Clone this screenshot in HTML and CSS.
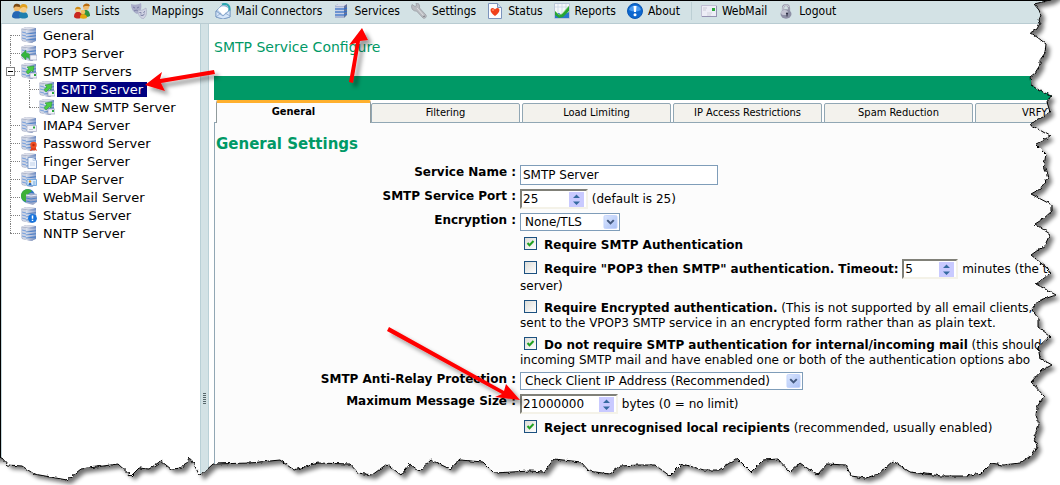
FILE: index.html
```html
<!DOCTYPE html>
<html lang="en">
<head>
<meta charset="utf-8">
<title>SMTP Service Configure</title>
<link rel="stylesheet" href="styles.css">
</head>
<body>
<svg class="defs" aria-hidden="true">
  <defs>
    <linearGradient id="gSrv" x1="0" x2="1"><stop offset="0" stop-color="#dfe4ee"/><stop offset=".45" stop-color="#a3b0cf"/><stop offset="1" stop-color="#6d8cc4"/></linearGradient>
    <linearGradient id="gBtn" x1="0" y1="0" x2="1" y2="1"><stop offset="0" stop-color="#dbe6fe"/><stop offset="1" stop-color="#a9c0f5"/></linearGradient>
    <symbol id="server" viewBox="0 0 16 16">
      <path d="M0 2 5 0l10 1v12l-4 3-10-2z" fill="#8d97b3"/>
      <path d="M0 2 5 0l10 1-4 2z" fill="#dcdfea"/>
      <path d="M0 2l5 1v12l-5-2z" fill="#cdd3e2"/>
      <path d="M5 3l10-2v13l-5 2-5-1z" fill="url(#gSrv)"/>
      <path d="M1 5l4 1M1 8l4 1M1 11l4 1" stroke="#6d9add" stroke-width=".9"/>
      <path d="M5 7l10-1M5 10l10-1M5 13l10-1" stroke="#3c78c8" stroke-width=".8"/>
      <path d="M5 5l10-1M5 8l10-1M5 11l10-1" stroke="#d3dcf0" stroke-width=".6"/>
    </symbol>
    <symbol id="stack" viewBox="0 0 16 16">
      <path d="M2 3l3-2h9v11l-3 3H2z" fill="#66749c"/>
      <path d="M2 3l3-2h9l-3 2z" fill="#d8ddea"/>
      <path d="M2 3h9v12H2z" fill="#a9b6d3"/>
      <path d="M2 6h9l3-1M2 9h9l3-1M2 12h9l3-1" fill="none" stroke="#2f70d0" stroke-width="1.1"/>
      <path d="M2 4.500h9M2 7.500h9M2 10.500h9" stroke="#dbe2f1" stroke-width=".6"/>
    </symbol>
    <symbol id="users" viewBox="0 0 16 16">
      <path d="M0 14c0-4 2-6 5-6s5 2 5 6c-2 2-8 2-10 0z" fill="#2466b4"/>
      <circle cx="5" cy="5" r="3.300" fill="#f2bc6d"/><path d="M1.500 5C1 1 4 0 6 1c2 0 3 2 2 3-2 0-4-1-5 0z" fill="#7b4a15"/>
      <path d="M7 14c0-4 1-5 4-5s5 1 5 5c-2 2-7 2-9 0z" fill="#1f7fae"/>
      <circle cx="11.500" cy="6.500" r="3.300" fill="#f6cc86"/><path d="M8 6c-1-3 1-5 4-5 3 0 4 3 3 5-1-2-4-3-7 0z" fill="#e0a020"/>
    </symbol>
    <symbol id="lists" viewBox="0 0 16 16">
      <circle cx="12" cy="4" r="3" fill="#f2bc6d"/><path d="M9 4c0-4 6-5 7-1-2 1-4-1-7 1z" fill="#b86d12"/>
      <path d="M7 12c0-4 2-5 5-5 2 0 4 2 4 6-3 2-7 1-9-1z" fill="#2f9340"/>
      <circle cx="4" cy="7" r="2.800" fill="#f6cc86"/><path d="M1 7c0-4 5-4 6-1-2 1-4-1-6 1z" fill="#ce8a16"/>
      <path d="M0 14c0-3 1-5 4-5s4 2 4 5c-2 2-6 2-8 0z" fill="#c8271f"/>
      <circle cx="9" cy="9" r="2.300" fill="#efbf62"/><path d="M6 15c0-3 1-4 3-4s4 1 4 4c-2 1-5 1-7 0z" fill="#e3a80f"/>
    </symbol>
    <symbol id="masks" viewBox="0 0 16 16">
      <path d="M0 1c3 1 7 1 10-1 1 5 0 9-4 11C2 9 0 6 0 1z" fill="#a9adc9"/>
      <path d="M2 4l2 1M6 5l2-1M3 8c2-1 3-1 4 0" stroke="#6a6f98" stroke-width=".8" fill="none"/>
      <path d="M7 7c3 1 5 0 8-2 1 4 1 8-3 11-4-2-5-5-5-9z" fill="#cfd2e2" stroke="#a2a6c0" stroke-width=".6"/>
      <path d="M8.500 9.500l2 .5M12.500 9.500l1.500-1M9.500 12c2 1 3 0 4-1" stroke="#60658e" stroke-width=".9" fill="none"/>
    </symbol>
    <symbol id="mail" viewBox="0 0 16 16">
      <path d="M1 8 8 1l7 5v8l-7 2-7-2z" fill="#b4cbe6" stroke="#6e91bd" stroke-width=".7"/>
      <path d="M3 7c1-4 9-5 11 0l-6 5z" fill="#fff"/><path d="M7 1.500c5-2 9 2 7 6.500" stroke="#2ba7b1" stroke-width="2" fill="none"/>
      <path d="M1 8l7 5 7-6v7l-7 2-7-2z" fill="#d5e5f8" stroke="#6e91bd" stroke-width=".7"/><path d="M1 14l5-4M15 13l-5-3" stroke="#7d9cc4" stroke-width=".7"/>
    </symbol>
    <symbol id="wrench" viewBox="0 0 16 16">
      <path d="M1 1.500l3 2 1.500-1L5 0c3 0 4 2 3.500 5l6.500 7c1 2-1 4-3 3L5.500 8C2 8.500-.5 5 1 1.500z" fill="#b9bbc0" stroke="#94979d" stroke-width=".7"/>
      <path d="M6 5l7 8" stroke="#dfe1e4"/><circle cx="13" cy="13.300" r=".8" fill="#6e7178"/>
    </symbol>
    <symbol id="heart" viewBox="0 0 16 16">
      <path d="M1.500.5h9l4 4v11h-13z" fill="#fbfcff" stroke="#7c94bd"/><path d="M10.500.5v4h4" fill="#cfdcef" stroke="#7c94bd"/>
      <path d="M8 13C2 9 3 5 5.500 5 7 5 8 6.500 8 6.500S9 5 10.500 5C13 5 14 9 8 13z" fill="#f0401c"/><circle cx="6" cy="7" r="1" fill="#ff8b66"/>
    </symbol>
    <symbol id="chart" viewBox="0 0 16 16">
      <path d="M.5.500h15v15H.5z" fill="#f4f7fb" stroke="#b9c6d8"/><path d="M4 1v14M8 1v14M12 1v14M1 4h14" stroke="#c6d3e4" stroke-width=".7"/>
      <path d="M1 11l4-1 3 2 7-3v6H1z" fill="#2c75cb"/><path d="M1 8l4 4 3-1 7-8v5l-6 6-4 1-4-3z" fill="#26a534"/><path d="M1 8l4 4 3-1 7-8" fill="none" stroke="#86d66e" stroke-width=".7"/>
    </symbol>
    <symbol id="info" viewBox="0 0 16 16">
      <circle cx="8" cy="8" r="7.500" fill="#0c67cf" stroke="#0a58b4"/><path d="M2 7c1-6 11-6 12 0-4 2-8 2-12 0z" fill="#4b9bf0"/>
      <path d="M6.500 3h3L9 9H7z" fill="#fff"/><circle cx="8" cy="11.700" r="1.500" fill="#fff"/>
    </symbol>
    <symbol id="webmail" viewBox="0 0 16 16">
      <path d="M.5 2.500h15v11H.5z" fill="#ededf6" stroke="#c0bfd4"/><path d="M1 13.500h15M15.500 3v11" stroke="#9592b2"/>
      <path d="M2 5h4M2 7h3" stroke="#c2c3d1" stroke-width=".8"/><path d="M11 5h3v3h-3z" fill="#2ba83b"/><path d="M6 10h5M6 12h4" stroke="#cccdd9" stroke-width=".8"/>
    </symbol>
    <symbol id="lock" viewBox="0 0 16 16">
      <path d="M5 8V5c0-4 6-4 6 0v3" fill="none" stroke="#9a9cae" stroke-width="2.200"/><path d="M5 7V5c0-3 5-4 6-1" fill="none" stroke="#d8d9e4"/>
      <ellipse cx="8" cy="11" rx="5.500" ry="4.700" fill="#8e90a6"/><ellipse cx="6.500" cy="9.500" rx="3.500" ry="2.600" fill="#c3c4d2"/><circle cx="9" cy="10.500" r="1.100" fill="#303247"/><path d="M9 10.500v3" stroke="#303247"/>
    </symbol>
    <symbol id="b-in" viewBox="0 0 16 16"><path d="M0 10l5-5v3c4 0 5 3 4 7-1-2-2-3-4-3v3z" fill="#35b53e" stroke="#2c9a38" stroke-width=".5"/><path d="M9 10h7v5H9z" fill="#f1f2f9" stroke="#9b9fba" stroke-width=".7"/></symbol>
    <symbol id="b-out" viewBox="0 0 16 16"><path d="M6 4l7-1-1 6-1.500-1.500L7 11 5 8.500 8 6z" fill="#4ccb43" stroke="#2c9a38" stroke-width=".6"/><path d="M9 10h7v5H9z" fill="#f1f2f9" stroke="#9b9fba" stroke-width=".7"/><path d="M13 11h2v2h-2z" fill="#2ba83b"/></symbol>
    <symbol id="b-card" viewBox="0 0 16 16"><path d="M6 8.500h9.500v6H6z" fill="#f1f2f9" stroke="#b4b7cb" stroke-width=".8"/><path d="M12 9.500h2v2h-2z" fill="#2ba83b"/><path d="M8 12.500h4" stroke="#c3c5d3"/></symbol>
    <symbol id="b-seal" viewBox="0 0 16 16"><path d="M11 11l-2 5 3-1 1 1 1-1 2 1-2-5z" fill="#e23a17"/><circle cx="12.500" cy="10" r="3.200" fill="#f04e22"/><circle cx="12.500" cy="10" r="1.200" fill="#b72a10"/></symbol>
    <symbol id="b-page" viewBox="0 0 16 16"><path d="M7 4.500h5l3.500 3v8H7z" fill="#f2f7ff" stroke="#7f9cca" stroke-width=".9"/><path d="M12 4.500v3h3.500M9 10h5M9 12h5" fill="none" stroke="#b3c6e2" stroke-width=".8"/></symbol>
    <symbol id="b-id" viewBox="0 0 16 16"><path d="M6 8.500h9.500v6H6z" fill="#d9ebfc" stroke="#6fa6df" stroke-width=".9"/><circle cx="9" cy="10.500" r="1.200" fill="#e29a2a"/><path d="M7.500 14c0-3 3-3 3 0z" fill="#2a62b5"/><path d="M12 11h2.500M12 13h2.500" stroke="#5594d3" stroke-width=".8"/></symbol>
    <symbol id="b-info" viewBox="0 0 16 16"><circle cx="11.500" cy="11.300" r="4.400" fill="#1673dc"/><path d="M11.500 8.500v3.300M11.500 12.800v1.300" stroke="#fff" stroke-width="1.500"/></symbol>
    <symbol id="globe" viewBox="0 0 16 16"><circle cx="7" cy="7" r="7" fill="#2e75c3"/><path d="M0 7c0-6 7-9 11-5L7 5l1 3-3 5c-3-1-5-3-5-6z" fill="#3fb039"/><path d="M5 6l5-2 6 1v8l-4 3-7-2z" fill="#9ba8c9"/><path d="M5 9l5 1 6-1M5 12l5 1 6-1" stroke="#3c78c8" stroke-width=".8" fill="none"/><path d="M5 6l5 1 6-1" stroke="#eceffa" fill="none"/></symbol>
    <symbol id="down" viewBox="0 0 15 15"><rect x=".5" y=".5" width="14" height="14" rx="1.500" fill="url(#gBtn)" stroke="#c3d3fc"/><path d="M4 5.500l3.500 3.500L11 5.500" fill="none" stroke="#43597f" stroke-width="2.200"/></symbol>
    <symbol id="spin" viewBox="0 0 15 15"><rect width="15" height="15" fill="#c9caff"/><path d="M4 6l3.500-3.500L11 6zM4 9.500h7L7.500 13z" fill="#356aa0"/></symbol>
  </defs>
</svg>

<div class="app">
  <nav class="toolbar" aria-label="Main">
    <a href="#users"><svg><use href="#users"/></svg>Users</a>
    <a href="#lists"><svg><use href="#lists"/></svg>Lists</a>
    <a href="#mappings"><svg><use href="#masks"/></svg>Mappings</a>
    <a href="#connectors"><svg><use href="#mail"/></svg>Mail Connectors</a>
    <a href="#services"><svg><use href="#stack"/></svg>Services</a>
    <a href="#settings"><svg><use href="#wrench"/></svg>Settings</a>
    <a href="#status"><svg><use href="#heart"/></svg>Status</a>
    <a href="#reports"><svg><use href="#chart"/></svg>Reports</a>
    <a href="#about"><svg><use href="#info"/></svg>About</a>
    <span class="divider"></span>
    <a href="#webmail"><svg><use href="#webmail"/></svg>WebMail</a>
    <a href="#logout"><svg><use href="#lock"/></svg>Logout</a>
  </nav>

  <div class="workspace">
    <aside class="sidebar">
      <ul class="tree">
        <li><a href="#general"><svg><use href="#server"/></svg><span>General</span></a></li>
        <li><a href="#pop3"><svg><use href="#server"/><use href="#b-in"/></svg><span>POP3 Server</span></a></li>
        <li><button class="expander" aria-label="Collapse SMTP Servers"></button><a href="#smtps"><svg><use href="#server"/><use href="#b-out"/></svg><span>SMTP Servers</span></a>
          <ul>
            <li><a href="#smtp" class="selected"><svg><use href="#server"/><use href="#b-out"/></svg><span>SMTP Server</span></a></li>
            <li><a href="#newsmtp"><svg><use href="#server"/><use href="#b-out"/></svg><span>New SMTP Server</span></a></li>
          </ul>
        </li>
        <li><a href="#imap4"><svg><use href="#server"/><use href="#b-card"/></svg><span>IMAP4 Server</span></a></li>
        <li><a href="#password"><svg><use href="#server"/><use href="#b-seal"/></svg><span>Password Server</span></a></li>
        <li><a href="#finger"><svg><use href="#server"/><use href="#b-page"/></svg><span>Finger Server</span></a></li>
        <li><a href="#ldap"><svg><use href="#server"/><use href="#b-id"/></svg><span>LDAP Server</span></a></li>
        <li><a href="#webmailserver"><svg><use href="#globe"/></svg><span>WebMail Server</span></a></li>
        <li><a href="#statusserver"><svg><use href="#server"/><use href="#b-info"/></svg><span>Status Server</span></a></li>
        <li><a href="#nntp"><svg><use href="#server"/></svg><span>NNTP Server</span></a></li>
      </ul>
    </aside>
    <div class="splitter"><span class="grip"></span></div>
    <main class="content">
      <h1>SMTP Service Configure</h1>
      <div class="band"></div>
      <div class="tabs" role="tablist">
        <button class="tab active" role="tab" aria-selected="true">General</button>
        <button class="tab" role="tab">Filtering</button>
        <button class="tab" role="tab">Load Limiting</button>
        <button class="tab" role="tab">IP Access Restrictions</button>
        <button class="tab" role="tab">Spam Reduction</button>
        <button class="tab last" role="tab">VRFY</button>
      </div>
      <section class="panel">
        <h2>General Settings</h2>
        <form class="form">
          <label class="name" for="svc">Service Name :</label>
          <div class="field"><input class="text" id="svc" type="text" value="SMTP Server"></div>

          <label class="name" for="port">SMTP Service Port :</label>
          <div class="field"><span class="spinner port"><input id="port" type="text" value="25"><svg><use href="#spin"/></svg></span> (default is 25)</div>

          <label class="name" for="enc">Encryption :</label>
          <div class="field"><span class="drop short"><select id="enc"><option>None/TLS</option></select><svg><use href="#down"/></svg></span></div>

          <div class="field check"><input type="checkbox" id="c1" checked><label for="c1">Require SMTP Authentication</label></div>

          <div class="field check"><input type="checkbox" id="c2"><label for="c2">Require "POP3 then SMTP" authentication.</label> <label for="timeout">Timeout:</label> <span class="spinner time"><input id="timeout" type="text" value="5"><svg><use href="#spin"/></svg></span> minutes (the ti<br>server)</div>

          <div class="field check"><input type="checkbox" id="c3"><label for="c3">Require Encrypted authentication.</label> (This is not supported by all email clients,<br>sent to the VPOP3 SMTP service in an encrypted form rather than as plain text.</div>

          <div class="field check"><input type="checkbox" id="c4" checked><label for="c4">Do not require SMTP authentication for internal/incoming mail</label> (this should a<br>incoming SMTP mail and have enabled one or both of the authentication options abo</div>

          <label class="name" for="relay">SMTP Anti-Relay Protection :</label>
          <div class="field"><span class="drop long"><select id="relay"><option>Check Client IP Address (Recommended)</option></select><svg><use href="#down"/></svg></span></div>

          <label class="name" for="size">Maximum Message Size :</label>
          <div class="field"><span class="spinner size"><input id="size" type="text" value="21000000"><svg><use href="#spin"/></svg></span> bytes (0 = no limit)</div>

          <div class="field check"><input type="checkbox" id="c5" checked><label for="c5">Reject unrecognised local recipients</label> (recommended, usually enabled)</div>
        </form>
      </section>
    </main>
  </div>
</div>

<svg class="overlay" viewBox="0 0 1060 485" preserveAspectRatio="none" aria-hidden="true">
  <defs>
    <filter id="rough" x="-5%" y="-5%" width="110%" height="110%" color-interpolation-filters="sRGB"><feTurbulence type="fractalNoise" baseFrequency=".28" numOctaves="1" seed="4" result="n"/><feDisplacementMap in="SourceGraphic" in2="n" scale="4" xChannelSelector="R" yChannelSelector="G"/></filter>
    <filter id="soft" x="-5%" y="-5%" width="110%" height="110%"><feGaussianBlur stdDeviation="2"/></filter>
    <filter id="arrowShadow" x="-30%" y="-30%" width="170%" height="170%"><feDropShadow dx="4" dy="4" stdDeviation="2" flood-opacity=".4"/></filter>
    <path id="edge" d="M-20-20H1080L1051 0 1034 4 1039 10 1041 15 1039 20 1040 23 1037 29 1030 33 1037 37 1046 44 1045 53 1040 60 1040 65 1035 73 1030 77 1031 85 1037 89 1051 96 1047 102 1050 112 1043 117 1029 124 1038 129 1050 136 1042 141 1036 144 1046 154 1044 165 1048 178 1040 189 1031 194 1052 205 1052 211 1043 219 1035 224 1050 234 1045 245 1031 255 1047 268 1050 273 1043 279 1036 284 1056 295 1038 301 1032 310 1038 318 1038 327 1050 336 1038 347 1040 358 1052 365 1042 370 1031 382 1044 396 1037 407 1036 415 1039 425 1034 437 1037 447 1032 455 1020 463 1003 465 991 463 981 473 966 476 942 476 910 472 893 461 878 474 866 478 851 476 846 465 827 464 817 475 800 463 790 472 778 459 763 460 751 472 737 458 719 470 704 470 682 464 670 476 655 465 638 465 620 466 609 474 589 471 581 462 554 459 544 472 530 471 494 473 483 462 460 460 450 469 431 460 419 471 410 464 401 475 387 464 372 475 358 473 350 464 318 463 294 470 280 460 250 463 213 464 200 476 190 457 182 468 171 469 161 461 149 469 139 468 131 476 118 464 81 469 67 480 34 474 22 466 8 465 2 458H-20Z"/>
    <mask id="outside" maskUnits="userSpaceOnUse" x="-20" y="-20" width="1100" height="525"><rect x="-20" y="-20" width="1100" height="525" fill="#fff"/><use href="#edge" fill="#000" filter="url(#rough)"/></mask>
  </defs>
  <g mask="url(#outside)"><rect width="1060" height="485" fill="#fff"/><g transform="translate(4 4)" opacity=".55"><use href="#edge" filter="url(#soft)"/></g></g>
  <use href="#edge" fill="none" stroke="#000" filter="url(#rough)"/>
  <g fill="#f00" filter="url(#arrowShadow)">
    <path d="M214 70 215 74 161 83 165 91 145 85 162 72 160 79Z"/>
    <path d="M349 82 356 43 349 45 362 28 368 40 360 41 353 83Z"/>
    <path d="M389 327 504 391 506 384 520 400 495 397 502 394 387 331Z"/>
  </g>
</svg>
</body>
</html>
```
FILE: styles.css
```css
* { box-sizing: border-box; }
body {
  margin: 0;
  overflow: hidden;
  background: #fff;
  color: #000;
  font: 12px/15px "DejaVu Sans", Verdana, sans-serif;
}
a { color: inherit; text-decoration: none; }
.defs { position: absolute; width: 0; height: 0; }

.app {
  display: flex;
  flex-direction: column;
  height: 100vh;
  border: solid #000;
  border-width: 1px 0 0 1px;
}

.toolbar {
  display: flex;
  flex: none;
  align-items: center;
  gap: 11px;
  height: 23px;
  padding: 0 11px 2px;
  background: #d3e2e5;
  border-bottom: 1px solid #b9ccd2;
  font: 12px/16px "DejaVu Sans Condensed", Tahoma, sans-serif;
  white-space: nowrap;
}
.toolbar a { display: flex; align-items: center; gap: 5px; }
.toolbar svg { width: 16px; height: 16px; }
.divider { width: 1px; height: 18px; margin-right: -2px; background: #bccfd4; }

.workspace { display: flex; flex: 1; min-height: 0; }

.sidebar { width: 199px; flex: none; padding-top: 2px; border-left: 1px solid #c3d7dc; }
.tree, .tree ul { list-style: none; margin: 0; padding: 0; }
.tree { font-size: 13px; line-height: 18px; }
.tree li { position: relative; padding-left: 19px; }
.tree ul li { padding-left: 18px; }
.tree a { display: flex; align-items: center; gap: 2px; height: 18px; white-space: nowrap; }
.tree svg { width: 16px; height: 16px; flex: none; }
.tree span { padding: 0 4px; line-height: 15px; }
.tree .selected span { background: #000080; color: #fff; }
.tree li::before {
  content: "";
  position: absolute;
  top: 0;
  bottom: 0;
  left: 8px;
  border-left: 1px dotted #808080;
}
.tree li::after {
  content: "";
  position: absolute;
  top: 9px;
  left: 8px;
  width: 10px;
  border-top: 1px dotted #808080;
}
.tree > li:first-child::before { top: 9px; }
.tree li:last-child::before { bottom: auto; height: 9px; }
.expander {
  position: absolute;
  z-index: 1;
  top: 5px;
  left: 4px;
  width: 9px;
  height: 9px;
  padding: 0;
  border: 1px solid #808080;
  background: linear-gradient(#000, #000) center / 5px 1px no-repeat #fff;
}

.splitter {
  display: flex;
  align-items: center;
  justify-content: center;
  flex: none;
  width: 9px;
  padding-top: 288px;
  background: #d3e2e5;
  border: solid #b9d0d6;
  border-width: 0 1px;
}
.grip { width: 3px; height: 12px; background: repeating-linear-gradient(#58686c 0 1px, transparent 1px 2px); }

.content { display: flex; flex: 1; flex-direction: column; min-width: 0; padding-left: 5px; overflow: hidden; }
h1 { flex: none; margin: 0; padding: 14px 0 20px; color: #009966; font-size: 14px; line-height: 18px; font-weight: normal; }
.band { flex: none; height: 24px; background: #009966; }

.tabs { display: flex; flex: none; align-items: flex-end; gap: 2px; height: 23px; padding-left: 2px; background: linear-gradient(#91a7b4, #91a7b4) bottom / 100% 1px no-repeat; }
.tab {
  flex: none;
  width: 149px;
  height: 20px;
  padding: 0;
  border: 1px solid #91a7b4;
  border-radius: 2px 2px 0 0;
  background: #f3f2ed;
  color: #000;
  font: 11px/16px "DejaVu Sans Condensed", Tahoma, sans-serif;
}
.tab.active {
  width: 155px;
  height: 23px;
  margin-right: -2px;
  padding-bottom: 2px;
  border: solid #919b9c;
  border-width: 3px 1px 0;
  border-top-color: #ffb02e;
  background: #fcfcfc;
  font-weight: bold;
}
.tab.last { padding-left: 46px; text-align: left; }

.panel { flex: 1; border-left: 1px solid #91a7b4; background: #fcfcfc; }
h2 { margin: 0; padding: 11px 0 11px 1px; color: #009966; font-size: 15px; line-height: 20px; }

.form { display: grid; grid-template-columns: 301px 1fr; column-gap: 4px; row-gap: 4px; white-space: nowrap; }
.name { text-align: right; font-weight: bold; }
.field { grid-column: 2; min-width: 0; }
.field label { font-weight: bold; }
.check { padding-top: 2px; }
input, select { font: inherit; color: inherit; }

.text { display: block; width: 198px; height: 20px; padding: 0 2px; border: 1px solid #7f9db9; background: #fff; }

.spinner {
  display: inline-flex;
  align-items: center;
  height: 20px;
  vertical-align: middle;
  padding-right: 2px;
  background: #fff;
  border: 2px solid #808078;
  border-right-color: #f4f2e8;
  border-bottom-color: #f4f2e8;
}
.spinner input { flex: 1; width: 0; padding: 0 1px; border: 0; background: none; outline: 0; }
.spinner svg { width: 15px; height: 15px; flex: none; }
.port { width: 68px; }
.time { width: 56px; }
.size { width: 98px; }

.drop { display: flex; position: relative; height: 18px; border: 1px solid #7f9db9; background: #fff; }
.drop select { flex: 1; appearance: none; padding: 0 4px; border: 0; background: none; line-height: 15px; }
.drop svg { position: absolute; top: 1px; right: 1px; width: 15px; height: 14px; pointer-events: none; }
.short { width: 100px; }
.long { width: 283px; }

input[type="checkbox"] {
  appearance: none;
  width: 13px;
  height: 13px;
  margin: 0 7px 0 4px;
  vertical-align: -1px;
  border: 1px solid #1c5180;
  background: linear-gradient(135deg, #dcdcd7, #fff);
}
input[type="checkbox"]:checked {
  background: url("data:image/svg+xml,%3Csvg xmlns='http://www.w3.org/2000/svg' viewBox='0 0 11 11'%3E%3Cpath d='M2.500 5l2 2.200L8.500 3' fill='none' stroke='%2321a121' stroke-width='2'/%3E%3C/svg%3E"), linear-gradient(135deg, #dcdcd7, #fff);
}

.overlay { position: absolute; inset: 0; width: 100%; height: 100%; pointer-events: none; }
```
